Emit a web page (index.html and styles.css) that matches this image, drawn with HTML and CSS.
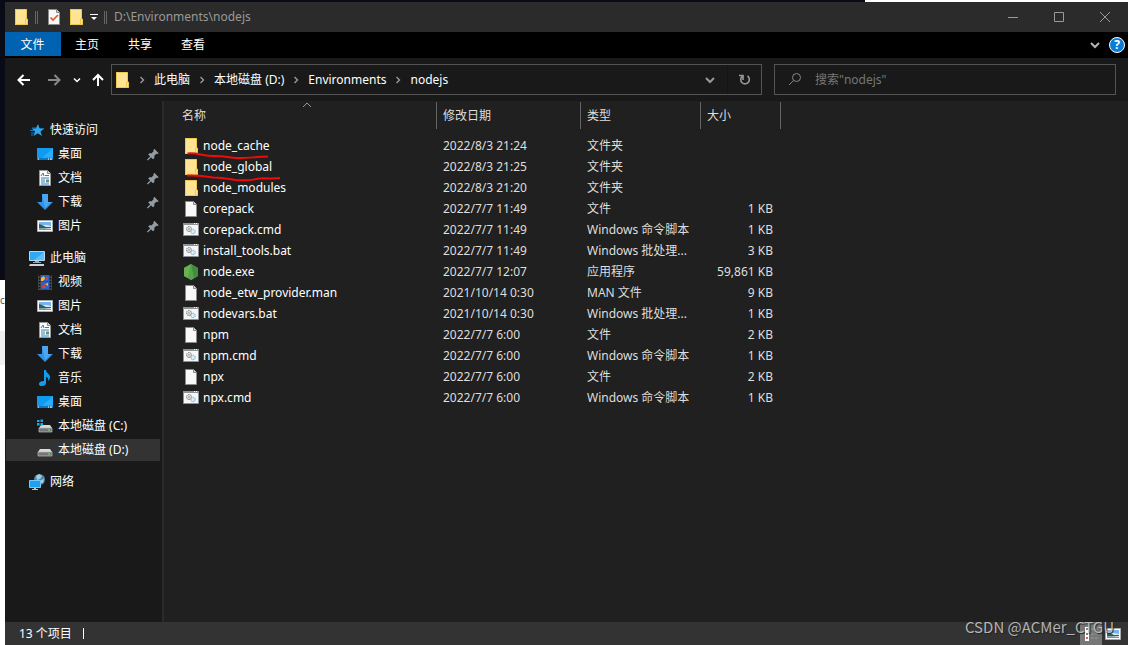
FILE: index.html
```html
<!DOCTYPE html>
<html lang="zh-CN">
<head>
<meta charset="utf-8">
<title>D:\Environments\nodejs</title>
<link rel="stylesheet" href="styles.css">
</head>
<body>
<svg class="sprite" aria-hidden="true">
  <symbol id="folder" viewBox="0 0 16 16"><path d="M2 0h11.500v10h1v6H2z" fill="#ffe593"/><path d="M2 .5h11.500v9.500M2.500 .5v15h12v-5.500h-2v5.500" fill="none" stroke="#efc94f"/></symbol>
  <symbol id="file" viewBox="0 0 16 16"><path d="M2.500 .5h8l3 3v12h-11z" fill="#f8f8f8" stroke="#8b8b8b"/><path d="M10.500 .5v3h3" fill="#ddd" stroke="#8b8b8b"/></symbol>
  <symbol id="script" viewBox="0 0 16 16"><path d="M.5 1.500h15v12H.5z" fill="#f7f7f7" stroke="#8d9296"/><path d="M0 1h16v2H0z" fill="#8d9296"/><path d="M11 1.500h1M13 1.500h1" stroke="#fff"/><circle cx="6" cy="7" r="2.500" fill="#eee" stroke="#73777a" stroke-dasharray="1.500 .6"/><circle cx="6" cy="7" r="1" fill="none" stroke="#888" stroke-width=".6"/><circle cx="10" cy="9.500" r="2.200" fill="#d8effa" stroke="#69a7c8" stroke-dasharray="1.300 .5"/></symbol>
  <symbol id="node" viewBox="0 0 16 16"><path d="M8 0l7 4v8l-7 4-7-4V4z" fill="#549b48"/><path d="M8 0L1 4v8l4 2z" fill="#68b34f"/><path d="M8 0l7 4v8l-7 4z" fill="#438b3e"/><path d="M8 0L5 14l3 2 3-2z" fill="#58a349"/></symbol>
  <symbol id="star" viewBox="0 0 16 16"><path d="M9 2l1.500 4.200 5 .2-4 3 1.500 4.600-4.200-2.700L4.500 14 6 9.300 2.500 6.500l4.500-.3z" fill="#2ea6f2"/><path d="M3 6h4M1 8.500h4M2 11h3M2 13h2" stroke="#1678b8"/></symbol>
  <symbol id="desktop" viewBox="0 0 16 16"><path d="M0 2h16v12H0z" fill="#109bf0"/><path d="M16 2v9L5 12z" fill="#28aeff"/><path d="M0 12h16v2H0z" fill="#0878c4"/><path d="M1 13h1M11 13h1M13 13h2" stroke="#fff"/></symbol>
  <symbol id="doc" viewBox="0 0 16 16"><path d="M2.500 .5h8l3 3v12h-11z" fill="#fafafa" stroke="#999"/><path d="M10.500 .5v3h3" fill="#ddd" stroke="#888"/><path d="M4 6l2-3 1 3M8 5.500h4M4 8h8M4 10h4M4 12h4M4 14h8" fill="none" stroke="#2786bb"/><path d="M9 9.500h3v3H9z" fill="#6c8d80"/></symbol>
  <symbol id="down" viewBox="0 0 16 16"><path d="M5 0h6v8h5l-8 8-8-8h5z" fill="#2f92e6"/><path d="M5 0h6v8h3l-6 6z" fill="#4ba5ef"/></symbol>
  <symbol id="picture" viewBox="0 0 16 16"><path d="M.5 2.500h15v11H.5z" fill="#fff" stroke="#aaa"/><path d="M2 4h12v4H2z" fill="#74b5ee"/><path d="M2 7h7l5 1v4H2z" fill="#dceaf0"/><path d="M2 6l3 1 4 2 5 0v1l-7 .5H2z" fill="#315f61"/><path d="M2 11h12v1H2z" fill="#5c9ccd"/></symbol>
  <symbol id="pc" viewBox="0 0 16 16"><path d="M.5 1.500h15v9H.5z" fill="#30aaf5" stroke="#b9d5e6"/><path d="M15 2v8L5 10z" fill="#59c2ff"/><path d="M6 11h4v1H6zM4 12h8v1H4z" fill="#8eabbc"/><path d="M1 14h14v2H0z" fill="#ccd3d8"/></symbol>
  <symbol id="video" viewBox="0 0 16 16"><path d="M1 1h14v15H1z" fill="#4b4b4b"/><path d="M2.500 1v15M13.500 1v15" stroke="#111" stroke-width="1.500" stroke-dasharray="1.500 1.500"/><path d="M4 1h8v6H4zM4 8h8v7H4z" fill="#315fc4"/><path d="M4 4l3-2 1 3-2 2H4zM8 10l3-1v3z" fill="#efc238"/><path d="M9 3h2v3H9zM5 12l3-2 1 4H5z" fill="#c5454a"/></symbol>
  <symbol id="music" viewBox="0 0 16 16"><path d="M7 0h2c0 3 4 4 4 7 0 2-1 3-2 4 1-3-1-4-2-4v6c0 2-2 3-4 3-3 0-4-2-2-4 1-1 3-1 4-1z" fill="#129bef"/></symbol>
  <symbol id="disk" viewBox="0 0 16 16"><path d="M3 7h10l2 3H1z" fill="#d9d9d9"/><path d="M1 10h14v4H1z" fill="#737779" stroke="#b9bdbf" stroke-width=".7"/><path d="M11 12h2" stroke="#66ef54"/></symbol>
  <symbol id="diskc" viewBox="0 0 16 16"><path d="M4 7h9l2 3H2z" fill="#d9d9d9"/><path d="M2 10h13v4H2z" fill="#737779" stroke="#b9bdbf" stroke-width=".7"/><path d="M11 12h2" stroke="#66ef54"/><path d="M0 2h2.500v2H0zM3.500 1.500H6V4H3.500zM0 5h2.500v2.500H0zM3.500 5H6v2.500H3.500z" fill="#12aef0"/></symbol>
  <symbol id="network" viewBox="0 0 16 16"><circle cx="10.500" cy="5.500" r="5.500" fill="#4d89ae"/><path d="M7 2l3-2 3 2-2 3-3 1zM12 6l3-1-1 4-3 0z" fill="#a8cbdc"/><path d="M.5 6.500h11v7H.5z" fill="#1ba2f2" stroke="#78c7f4"/><path d="M5 14h2v1h2v1H3v-1h2z" fill="#b2c7d4"/></symbol>
  <symbol id="pin" viewBox="0 0 16 16"><path d="M9.500 2l5 5-1.500 1-1.200-.3-2.300 2.300v2.500L8 14 2.500 8.500 4 7h2.500l2.300-2.300L8.500 3.500z" fill="#949ca3"/><path d="M6 10.500L1.500 15" stroke="#949ca3" stroke-width="1.500"/></symbol>
  <symbol id="next" viewBox="0 0 24 16"><path d="M10.500 5l3 3-3 3" fill="none" stroke="#999" stroke-width="1.400"/></symbol>
  <symbol id="chevron" viewBox="0 0 16 16"><path d="M4 6l4 4 4-4" fill="none" stroke="currentColor" stroke-width="2"/></symbol>
  <symbol id="arrow" viewBox="0 0 16 16"><path d="M14 8H3M7.500 3L2.500 8l5 5" fill="none" stroke="currentColor" stroke-width="2"/></symbol>
</svg>

<div class="screen">
  <aside class="behind" aria-hidden="true"><span class="behind-text">c</span><span class="behind-band"></span></aside>
  <div class="window">
    <header class="titlebar">
      <svg class="icon"><use href="#folder"/></svg><span class="grip"></span>
      <div class="quick">
        <button class="plain" aria-label="属性"><svg class="icon" viewBox="0 0 16 16"><path d="M2.500 .5h8l3 3v12h-11z" fill="#f8f8f8" stroke="#8b8b8b"/><path d="M10.500 .5v3h3" fill="#ddd" stroke="#888"/><path d="M4.500 8.500l2.500 2.500 5-5" fill="none" stroke="#e65a28" stroke-width="1.700"/></svg></button>
        <button class="plain" aria-label="新建文件夹"><svg class="icon"><use href="#folder"/></svg></button>
      </div>
      <button class="plain menu-mark" aria-label="自定义快速访问工具栏"><svg width="8" height="8" viewBox="0 0 8 8"><path d="M0 1h8v1H0zM1 4h6L4 7z" fill="#fff"/></svg></button>
      <span class="grip"></span>
      <span class="title">D:\Environments\nodejs</span>
      <div class="controls">
        <button class="plain" aria-label="最小化"><svg width="12" height="12"><path d="M1 6.500h10" stroke="#999"/></svg></button>
        <button class="plain" aria-label="最大化"><svg width="12" height="12"><path d="M1.500 1.500h9v9h-9z" fill="none" stroke="#999"/></svg></button>
        <button class="plain" aria-label="关闭"><svg width="12" height="12"><path d="M1 1l10 10M11 1L1 11" stroke="#999"/></svg></button>
      </div>
    </header>
    <div class="ribbon">
      <button class="tab file-tab">文件</button><button class="tab">主页</button><button class="tab">共享</button><button class="tab">查看</button>
      <div class="ribbon-end">
        <button class="plain expand" aria-label="展开功能区"><svg class="icon"><use href="#chevron"/></svg></button>
        <button class="help" aria-label="帮助">?</button>
      </div>
    </div>
    <div class="navbar">
      <div class="history">
        <button class="plain" aria-label="后退"><svg class="icon"><use href="#arrow"/></svg></button>
        <button class="plain forward" aria-label="前进"><svg class="icon flip"><use href="#arrow"/></svg></button>
        <button class="plain recent" aria-label="最近位置"><svg class="small"><use href="#chevron"/></svg></button>
        <button class="plain up" aria-label="上移"><svg class="icon" viewBox="0 0 16 16"><path d="M8 14V3M3 8l5-5 5 5" fill="none" stroke="#fff" stroke-width="2"/></svg></button>
      </div>
      <div class="address">
        <svg class="icon"><use href="#folder"/></svg>
        <svg class="next"><use href="#next"/></svg><a href="#pc">此电脑</a>
        <svg class="next"><use href="#next"/></svg><a href="#d">本地磁盘 (D:)</a>
        <svg class="next"><use href="#next"/></svg><a href="#env">Environments</a>
        <svg class="next"><use href="#next"/></svg><a href="#nodejs">nodejs</a>
        <button class="plain drop" aria-label="以前的位置"><svg class="icon"><use href="#chevron"/></svg></button>
        <button class="plain refresh" aria-label="刷新"><svg class="icon" viewBox="0 0 16 16"><path d="M10.500 4A4.300 4.300 0 1 1 5 4.500M6 8V3.500H2" fill="none" stroke="#999" stroke-width="1.600"/></svg></button>
      </div>
      <label class="search">
        <svg class="icon" viewBox="0 0 16 16"><circle cx="9.500" cy="5.500" r="4" fill="none" stroke="#888"/><path d="M6.500 8.500L2 13" stroke="#888"/></svg>
        <input type="text" placeholder="搜索&quot;nodejs&quot;" aria-label="搜索">
      </label>
    </div>
    <div class="main">
      <nav class="sidebar">
        <ul>
          <li><a class="root" href="#quick"><svg class="icon"><use href="#star"/></svg>快速访问</a></li>
          <li><a href="#desktop1"><svg class="icon"><use href="#desktop"/></svg>桌面<svg class="pin"><use href="#pin"/></svg></a></li>
          <li><a href="#doc1"><svg class="icon"><use href="#doc"/></svg>文档<svg class="pin"><use href="#pin"/></svg></a></li>
          <li><a href="#down1"><svg class="icon"><use href="#down"/></svg>下载<svg class="pin"><use href="#pin"/></svg></a></li>
          <li><a href="#pic1"><svg class="icon"><use href="#picture"/></svg>图片<svg class="pin"><use href="#pin"/></svg></a></li>
        </ul>
        <ul>
          <li><a class="root" href="#thispc"><svg class="icon"><use href="#pc"/></svg>此电脑</a></li>
          <li><a href="#video1"><svg class="icon"><use href="#video"/></svg>视频</a></li>
          <li><a href="#pic2"><svg class="icon"><use href="#picture"/></svg>图片</a></li>
          <li><a href="#doc2"><svg class="icon"><use href="#doc"/></svg>文档</a></li>
          <li><a href="#down2"><svg class="icon"><use href="#down"/></svg>下载</a></li>
          <li><a href="#music1"><svg class="icon"><use href="#music"/></svg>音乐</a></li>
          <li><a href="#desktop2"><svg class="icon"><use href="#desktop"/></svg>桌面</a></li>
          <li><a href="#c"><svg class="icon"><use href="#diskc"/></svg>本地磁盘 (C:)</a></li>
          <li><a class="selected" href="#d2"><svg class="icon"><use href="#disk"/></svg>本地磁盘 (D:)</a></li>
        </ul>
        <ul>
          <li><a class="root" href="#net"><svg class="icon"><use href="#network"/></svg>网络</a></li>
        </ul>
      </nav>
      <main class="files">
        <table>
          <colgroup><col class="c-name"><col class="c-date"><col class="c-type"><col class="c-size"></colgroup>
          <thead><tr><th class="sorted">名称<svg class="sort" viewBox="0 0 10 6"><path d="M1 5l4-4 4 4" fill="none" stroke="#999"/></svg></th><th>修改日期</th><th>类型</th><th>大小</th></tr></thead>
          <tbody>
            <tr><td><span class="name"><svg class="icon"><use href="#folder"/></svg>node_cache</span></td><td>2022/8/3 21:24</td><td>文件夹</td><td></td></tr>
            <tr><td><span class="name"><svg class="icon"><use href="#folder"/></svg>node_global</span></td><td>2022/8/3 21:25</td><td>文件夹</td><td></td></tr>
            <tr><td><span class="name"><svg class="icon"><use href="#folder"/></svg>node_modules</span></td><td>2022/8/3 21:20</td><td>文件夹</td><td></td></tr>
            <tr><td><span class="name"><svg class="icon"><use href="#file"/></svg>corepack</span></td><td>2022/7/7 11:49</td><td>文件</td><td>1 KB</td></tr>
            <tr><td><span class="name"><svg class="icon"><use href="#script"/></svg>corepack.cmd</span></td><td>2022/7/7 11:49</td><td>Windows 命令脚本</td><td>1 KB</td></tr>
            <tr><td><span class="name"><svg class="icon"><use href="#script"/></svg>install_tools.bat</span></td><td>2022/7/7 11:49</td><td>Windows 批处理...</td><td>3 KB</td></tr>
            <tr><td><span class="name"><svg class="icon"><use href="#node"/></svg>node.exe</span></td><td>2022/7/7 12:07</td><td>应用程序</td><td>59,861 KB</td></tr>
            <tr><td><span class="name"><svg class="icon"><use href="#file"/></svg>node_etw_provider.man</span></td><td>2021/10/14 0:30</td><td>MAN 文件</td><td>9 KB</td></tr>
            <tr><td><span class="name"><svg class="icon"><use href="#script"/></svg>nodevars.bat</span></td><td>2021/10/14 0:30</td><td>Windows 批处理...</td><td>1 KB</td></tr>
            <tr><td><span class="name"><svg class="icon"><use href="#file"/></svg>npm</span></td><td>2022/7/7 6:00</td><td>文件</td><td>2 KB</td></tr>
            <tr><td><span class="name"><svg class="icon"><use href="#script"/></svg>npm.cmd</span></td><td>2022/7/7 6:00</td><td>Windows 命令脚本</td><td>1 KB</td></tr>
            <tr><td><span class="name"><svg class="icon"><use href="#file"/></svg>npx</span></td><td>2022/7/7 6:00</td><td>文件</td><td>2 KB</td></tr>
            <tr><td><span class="name"><svg class="icon"><use href="#script"/></svg>npx.cmd</span></td><td>2022/7/7 6:00</td><td>Windows 命令脚本</td><td>1 KB</td></tr>
          </tbody>
        </table>
        <svg class="marks" viewBox="0 0 104 34" aria-hidden="true"><path d="M7.500 3.500C13 3 16 3.500 21 4.500S28 6 34 6c12 0 18 2 26 2 10 0 14-1 28-1.500"/><path d="M7 25.500c14-.5 18 .5 26 2 10 0 14 1 22 2.500 12 1 18 0 24-1.500 7-.5 14 .5 21-.5"/></svg>
      </main>
    </div>
    <footer class="status">
      <span>13 个项目</span><span class="caret"></span>
      <div class="views">
        <button class="plain view active" aria-label="详细信息"><svg class="icon" viewBox="0 0 16 16"><path d="M2 1h4v14H2z" fill="#fff"/><path d="M3 3h2M3 8h2" stroke="#555" stroke-width="1.500"/><path d="M3 12h2" stroke="#b33" stroke-width="1.500"/><path d="M8 3h3M12 3h3M8 8h3M12 8h3M8 12h3M12 12h3" stroke="#999"/></svg></button>
        <button class="plain view" aria-label="大图标"><svg class="icon"><use href="#picture"/></svg></button>
      </div>
      <span class="watermark">CSDN @ACMer_CTGU</span>
    </footer>
  </div>
</div>
</body>
</html>
```

FILE: styles.css
```css
* { box-sizing: border-box; }

body {
  margin: 0;
  background: linear-gradient(90deg, #090b16 865px, #fff 865px);
  color: #fff;
  font: 12px/16px "Noto Sans", "Noto Sans CJK SC", sans-serif;
}

a { color: inherit; text-decoration: none; }
ul { margin: 0; padding: 0; list-style: none; }
button, input { font: inherit; color: inherit; }
svg { display: block; flex: none; }

.sprite { display: none; }
.icon { width: 16px; height: 16px; }
.small { width: 12px; height: 12px; }

.screen { display: flex; min-height: 100vh; }

.behind {
  display: flex;
  flex-direction: column;
  width: 5px;
  flex: none;
  background: linear-gradient(#090b16 280px, #fff 280px);
  color: #555;
}
.behind-text { padding-top: 292px; font-size: 10px; }
.behind-band { height: 34px; margin-top: 23px; background: #f0f0f0; }

.window {
  display: flex;
  flex: 1;
  flex-direction: column;
  min-width: 0;
  margin: 2px 1px 0 0;
  background: #202020;
}

.plain {
  display: flex;
  align-items: center;
  justify-content: center;
  padding: 0;
  border: 0;
  background: none;
}

.titlebar {
  display: flex;
  align-items: center;
  height: 30px;
  padding-left: 8px;
  background: #2b2b2b;
}
.grip { width: 3px; height: 13px; margin-left: 6px; border: solid #666; border-width: 0 1px; }
.quick { display: flex; gap: 6px; margin-left: 8px; }
.menu-mark { margin-left: 6px; }
.title { margin-left: 7px; color: #999; }
.controls { display: flex; height: 100%; margin-left: auto; }
.controls .plain { width: 46px; }

.ribbon { display: flex; height: 26px; background: #000; }
.tab { width: 53px; height: 24px; padding: 2px 1px 0 0; border: 0; background: none; }
.file-tab { width: 56px; background: #0063b1; }
.ribbon-end { display: flex; align-items: center; gap: 6px; margin-left: auto; padding-right: 3px; color: #b5b5b5; }
.help {
  width: 16px;
  height: 16px;
  padding: 0;
  border: 1px solid #fff;
  border-radius: 50%;
  background: #0b7bd8;
  color: #fff;
  font-weight: 700;
  line-height: 14px;
}

.navbar {
  display: flex;
  align-items: center;
  height: 43px;
  padding-right: 12px;
  background: #191919;
}
.history { display: flex; width: 106px; flex: none; padding-left: 11px; }
.forward { margin-left: 14px; color: #888; }
.recent { margin-left: 9px; }
.up { margin-left: 7px; }
.flip { transform: scaleX(-1); }
.address {
  display: flex;
  align-items: center;
  flex: 651 1 651px;
  height: 31px;
  padding-left: 2px;
  border: 1px solid #535353;
}
.next { width: 24px; height: 16px; }
.drop { width: 34px; height: 100%; margin-left: auto; color: #999; }
.refresh { width: 34px; height: 100%; border-left: 1px solid #141414; }
.search {
  display: flex;
  align-items: center;
  flex: 342 1 342px;
  height: 31px;
  margin-left: 12px;
  padding: 0 12px;
  border: 1px solid #535353;
}
.search input { flex: 1; min-width: 0; margin-left: 12px; padding: 0; border: 0; outline: 0; background: none; }
.search input::placeholder { color: #777; opacity: 1; }

.main { display: flex; flex: 1; }
.sidebar {
  width: 159px;
  flex: none;
  padding: 18px 2px 0 1px;
  border-right: 2px solid #2b2b2b;
  background: #191919;
}
.sidebar ul { display: grid; gap: 2px; margin-bottom: 10px; }
.sidebar a { display: flex; align-items: center; gap: 5px; height: 22px; padding-left: 31px; }
.sidebar .root { padding-left: 23px; }
.sidebar .selected { background: #333; }
.pin { width: 14px; height: 14px; margin-left: auto; }

.files { position: relative; flex: 1; padding: 1px 0 0 14px; }
table { width: 603px; border-spacing: 0; table-layout: fixed; color: #dedede; }
.c-name { width: 259px; }
.c-date { width: 144px; }
.c-type { width: 120px; }
.c-size { width: 80px; }
th {
  position: relative;
  height: 27px;
  padding: 0 0 0 6px;
  border-right: 1px solid #636363;
  font-weight: 400;
  text-align: left;
}
.sorted { padding-left: 4px; }
.sort { position: absolute; top: 0; left: 50%; width: 10px; height: 6px; margin-left: -5px; }
tbody::before { content: ""; display: block; height: 6px; }
td { height: 21px; padding: 0 0 0 6px; white-space: nowrap; }
td:first-child { padding-left: 5px; color: #fff; }
td:last-child { padding-right: 8px; text-align: right; }
.name { display: flex; align-items: center; gap: 4px; }
.marks { position: absolute; top: 49px; left: 16px; width: 104px; height: 34px; fill: none; stroke: #f00a0a; stroke-width: 2; }

.status {
  position: relative;
  display: flex;
  align-items: center;
  height: 23px;
  padding: 0 4px 0 14px;
  background: #333;
}
.caret { width: 1px; height: 11px; margin-left: 11px; background: #fff; }
.views { display: flex; height: 100%; margin-left: auto; }
.view { width: 22px; }
.active { background: #777; }
.watermark {
  position: absolute;
  right: 14px;
  bottom: 6px;
  color: rgba(205, 205, 205, 0.85);
  font: 15px/24px "Noto Sans CJK SC", sans-serif;
  text-shadow: 1px 1px 1px #222;
}
```
